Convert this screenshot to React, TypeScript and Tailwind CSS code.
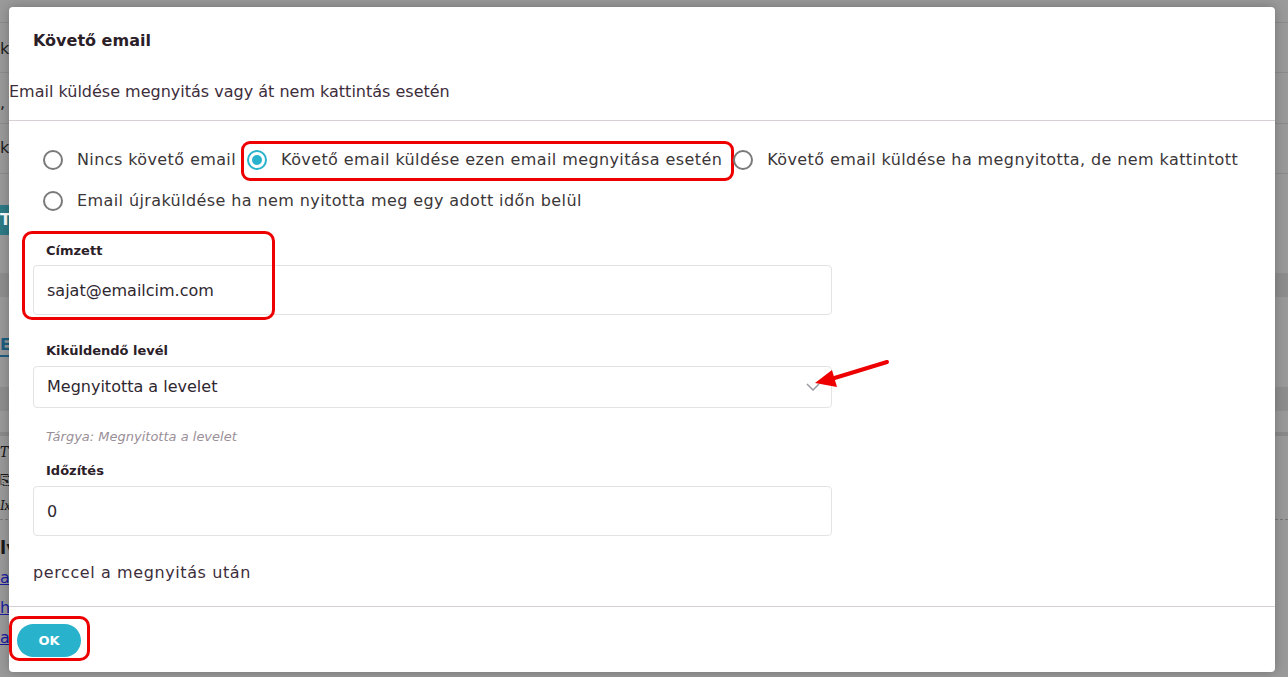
import { useState } from "react";

const font = { fontFamily: '"DejaVu Sans", "Noto Sans", sans-serif' };

const options = [
  "Nincs követő email",
  "Követő email küldése ezen email megnyitása esetén",
  "Követő email küldése ha megnyitotta, de nem kattintott",
  "Email újraküldése ha nem nyitotta meg egy adott időn belül",
];

function Radio({ label, checked, onClick, marked }: { label: string; checked: boolean; onClick: () => void; marked?: boolean }) {
  return (
    <button
      onClick={onClick}
      className="relative flex items-center gap-[14px] h-[30px] pl-[10px] pr-[1px] text-[16px] text-[#3b3638] tracking-[0.4px]"
    >
      {checked ? (
        <span className="w-[20px] h-[20px] rounded-full border-2 border-[#29b2cc] flex items-center justify-center">
          <span className="w-[10px] h-[10px] rounded-full bg-[#29b2cc]" />
        </span>
      ) : (
        <span className="w-[20px] h-[20px] rounded-full border-2 border-[#7a7a7a]" />
      )}
      <span>{label}</span>
      {marked && <span className="absolute left-[4px] -top-[4px] -right-[11px] -bottom-[6px] border-[3px] border-[#ee0000] rounded-[9px] pointer-events-none" />}
    </button>
  );
}

export default function App() {
  const [choice, setChoice] = useState(1);

  return (
    <div className="relative w-full h-[677px] overflow-hidden bg-[#9a9a9a]" style={font}>
      {/* Background page behind the overlay */}
      <div className="absolute inset-0 flex flex-col text-[#1a1a1a] text-[16px] leading-[20px]">
        <div className="h-[23px] border-b border-[#8c8c8c]" />
        <div className="h-[50px] pt-[16px] border-b border-[#8c8c8c]">k</div>
        <div className="h-[51px] pt-[20px] border-b border-[#8c8c8c]">,</div>
        <div className="h-[50px] pt-[14px] border-b border-[#8c8c8c]">k</div>
        <div className="h-[31px]" />
        <div className="h-[30px] w-[24px] pt-[5px] bg-[#2d7a86] text-white font-bold">T</div>
        <div className="h-[38px]" />
        <div className="h-[24px] bg-[#8e8e8e]" />
        <div className="h-[38px]" />
        <div className="h-[22px] w-[22px] text-[#1d5d80] font-bold border-b-2 border-[#1d5d80]">E</div>
        <div className="h-[30px]" />
        <div className="h-[24px] bg-[#8e8e8e]" />
        <div className="h-[25px] border-b-4 border-[#8a8a8a]" />
        <div className="h-[30px] pt-[6px] italic font-serif">T</div>
        <div className="h-[30px] text-[14px] pt-[4px]">⎘</div>
        <div className="h-[24px] text-[14px] italic font-serif border-b border-dashed border-[#777]">Ix</div>
        <div className="h-[40px] pt-[18px] font-bold text-[18px]">lv</div>
        <div className="h-[34px] pt-[8px] text-[#1a1aa0] underline">a</div>
        <div className="h-[32px] pt-[4px] text-[#1a1aa0] underline">h</div>
        <div className="h-[32px] pt-[2px] text-[#1a1aa0] underline">a</div>
      </div>

      {/* Modal */}
      <div className="absolute left-[9px] top-[7px] w-[1266px] h-[665px] bg-white rounded-[4px] shadow-[0_0_12px_rgba(0,0,0,0.25)] flex flex-col">
        <div className="h-[114px] border-b border-[#d6cfd5]">
          <h2 className="pl-[24px] pt-[22px] text-[16px] font-bold text-[#2b2028] leading-[24px]">Követő email</h2>
          <p className="pt-[27px] text-[16px] text-[#3d2d3b] leading-[24px]">Email küldése megnyitás vagy át nem kattintás esetén</p>
        </div>

        <div className="flex-1 pl-[24px] pr-[24px]">
          <div className="flex flex-wrap pt-[24px]">
            {options.map((o, i) => (
              <div key={i} className={i === 3 ? "mt-[11px]" : ""}>
                <Radio label={o} checked={choice === i} onClick={() => setChoice(i)} marked={i === 1} />
              </div>
            ))}
          </div>

          <div className="w-[799px] mt-[25px]">
            <div className="relative">
              <label className="block pl-[13px] text-[13px] font-bold text-[#2b2028] leading-[20px]">Címzett</label>
              <input
                defaultValue="sajat@emailcim.com"
                className="mt-[4px] w-full h-[50px] px-[13px] border border-[#e3e3e3] rounded-[4px] text-[16px] text-[#2f2730] outline-none"
              />
              <span className="absolute -left-[11px] -top-[10px] w-[253px] h-[89px] border-[3px] border-[#ee0000] rounded-[10px] pointer-events-none" />
            </div>

            <label className="block mt-[26px] pl-[13px] text-[13px] font-bold text-[#2b2028] leading-[20px]">Kiküldendő levél</label>
            <div className="relative mt-[5px] h-[42px] border border-[#e3e3e3] rounded-[4px] flex items-center px-[13px] text-[16px] text-[#2f2730]">
              <span className="flex-1">Megnyitotta a levelet</span>
              <svg width="14" height="8" viewBox="0 0 14 8" className="mr-[-2px]">
                <path d="M1 1l6 6 6-6" fill="none" stroke="#9a9aa3" strokeWidth="1.5" />
              </svg>
            </div>
            <p className="mt-[19px] pl-[13px] text-[13px] italic text-[#9a8f98] leading-[20px]">Tárgya: Megnyitotta a levelet</p>

            <label className="block mt-[14px] pl-[13px] text-[13px] font-bold text-[#2b2028] leading-[20px]">Időzítés</label>
            <input
              defaultValue="0"
              className="mt-[5px] w-full h-[50px] px-[13px] border border-[#e3e3e3] rounded-[4px] text-[16px] text-[#2f2730] outline-none"
            />
            <p className="mt-[25px] text-[16px] text-[#3d2d3b] leading-[24px] tracking-[0.6px]">perccel a megnyitás után</p>
          </div>
        </div>

        <div className="h-[66px] border-t border-[#d6cfd5] pl-[8px] pt-[17px]">
          <div className="relative inline-block">
            <button className="w-[64px] h-[33px] rounded-full bg-[#29b2cc] text-white text-[13px] font-bold">OK</button>
            <span className="absolute -left-[8px] -top-[8px] -right-[9px] -bottom-[4px] border-[3px] border-[#ee0000] rounded-[10px] pointer-events-none" />
          </div>
        </div>
      </div>

      {/* Annotation arrow */}
      <svg className="absolute left-[808px] top-[356px]" width="84" height="34" viewBox="0 0 84 34">
        <line x1="79" y1="6" x2="20" y2="24" stroke="#ee0000" strokeWidth="4" strokeLinecap="round" />
        <polygon points="7,27 24,14 29,31" fill="#ee0000" />
      </svg>
    </div>
  );
}
